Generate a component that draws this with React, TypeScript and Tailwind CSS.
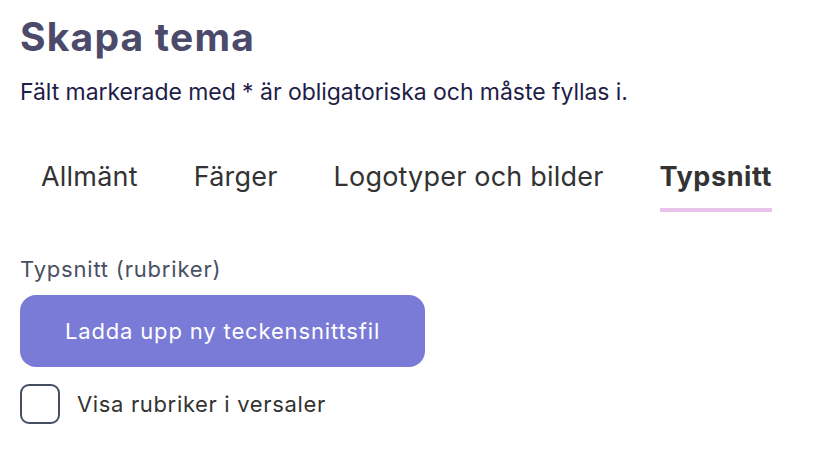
import React from "react";

export default function App() {
  const tabs = ["Allmänt", "Färger", "Logotyper och bilder", "Typsnitt"];
  return (
    <div className="w-[818px] h-[452px] bg-white pl-[20px] pt-[13px]" style={{ fontFamily: "Inter, 'Noto Sans', sans-serif" }}>
      <h1 className="text-[39px] leading-[48px] font-bold text-[#4b4a6b] tracking-[1.2px]">Skapa tema</h1>
      <p className="mt-[17px] text-[23px] leading-[28px] text-[#1e1e48] tracking-[-0.05px]">Fält markerade med * är obligatoriska och måste fyllas i.</p>
      <div className="mt-[55px] flex gap-[56px] pl-[21px]">
        {tabs.map((t, i) => (
          <div key={t} className="flex flex-col">
            <span className={`text-[27px] leading-[32px] text-[#333333] ${i === 3 ? "font-bold tracking-[0.6px]" : "tracking-[0.2px]"}`}>{t}</span>
            <div className={`mt-[15px] h-[4px] ${i === 3 ? "bg-[#e9c3ec]" : "bg-transparent"}`} />
          </div>
        ))}
      </div>
      <div className="mt-[43px] text-[22px] leading-[28px] text-[#4a5064] tracking-[0.8px]">Typsnitt (rubriker)</div>
      <button className="mt-[12px] w-[405px] h-[72px] rounded-[16px] bg-[#7a7bd7] text-white text-[22px] tracking-[0.85px] flex items-center justify-center">
        Ladda upp ny teckensnittsfil
      </button>
      <label className="mt-[17px] flex items-center gap-[17px]">
        <span className="w-[40px] h-[40px] rounded-[9px] border-2 border-[#464e63] bg-white" />
        <span className="text-[22px] text-[#333333] tracking-[0.65px]">Visa rubriker i versaler</span>
      </label>
    </div>
  );
}
